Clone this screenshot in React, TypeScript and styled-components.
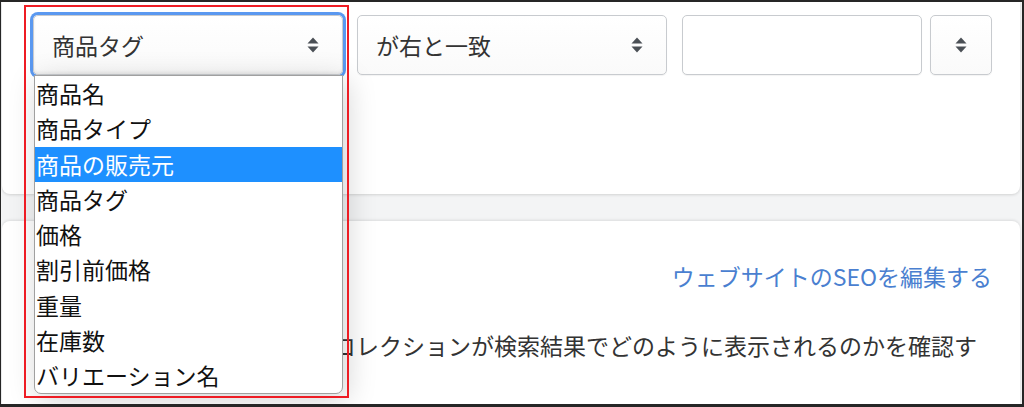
import styled, { createGlobalStyle } from 'styled-components';

const GlobalStyle = createGlobalStyle`
  body {
    margin: 0;
    font-family: "Noto Sans CJK JP", "Noto Sans", sans-serif;
  }
`;

const fieldOptions = [
  '商品名',
  '商品タイプ',
  '商品の販売元',
  '商品タグ',
  '価格',
  '割引前価格',
  '重量',
  '在庫数',
  'バリエーション名',
];

const SortArrows = () => (
  <svg width="12" height="18" viewBox="0 0 12 18" aria-hidden="true">
    <path d="M6 1.5 L11.5 7.5 H0.5 Z" fill="#4a4f55" />
    <path d="M6 16.5 L11.5 10.5 H0.5 Z" fill="#4a4f55" />
  </svg>
);

const App = () => {
  const selected = '商品の販売元';

  return (
    <>
      <GlobalStyle />
      <Frame>
        <TopCard>
          <FilterRow>
            <SelectBox $width={310} $focused>
              <SelectLabel>商品タグ</SelectLabel>
              <SortArrows />
              <OptionList>
                {fieldOptions.map((option) => (
                  <OptionItem key={option} $active={option === selected}>
                    {option}
                  </OptionItem>
                ))}
              </OptionList>
            </SelectBox>
            <SelectBox $width={310}>
              <SelectLabel>が右と一致</SelectLabel>
              <SortArrows />
            </SelectBox>
            <ValueInput type="text" />
            <SelectBox $width={62} $center>
              <SortArrows />
            </SelectBox>
          </FilterRow>
        </TopCard>
        <SeoCard>
          <SeoHeader>
            <SeoLink href="#">ウェブサイトのSEOを編集する</SeoLink>
          </SeoHeader>
          {/* the start of this line sits under the open list */}
          <SeoText>
            コレクションが検索結果でどのように表示されるのかを確認す
          </SeoText>
        </SeoCard>
        <Annotation />
      </Frame>
    </>
  );
};

const Frame = styled.div`
  position: relative;
  display: flex;
  flex-direction: column;
  row-gap: 27px;

  width: 1024px;
  height: 407px;
  box-sizing: border-box;
  overflow: hidden;

  border-style: solid;
  border-color: #262626;
  border-width: 2px 2px 3px 1px;
  background-color: #f3f4f5;
  color: #333333;
`;

const TopCard = styled.section`
  height: 192px;
  margin: 0 2px 0 1px;

  border-radius: 0 0 8px 8px;
  background-color: #ffffff;
  box-shadow: 0 1px 3px rgba(0, 0, 0, 0.14);
`;

const FilterRow = styled.div`
  display: flex;
  align-items: center;

  padding: 13px 0 0 31px;

  & > :nth-child(2) {
    margin-left: 14px;
  }
  & > :nth-child(3) {
    margin-left: 15px;
  }
  & > :nth-child(4) {
    margin-left: 8px;
  }
`;

const SelectBox = styled.div<{ $width: number; $focused?: boolean; $center?: boolean }>`
  position: relative;
  display: flex;
  align-items: center;
  justify-content: ${({ $center }) => ($center ? 'center' : 'space-between')};

  width: ${({ $width }) => $width}px;
  height: 60px;
  box-sizing: border-box;
  padding: ${({ $center }) => ($center ? '0' : '0 23px 0 18px')};

  border: 1px solid #c8cbcf;
  border-radius: 5px;
  background: linear-gradient(#ffffff, #fafafa);
  box-shadow: ${({ $focused }) =>
    $focused
      ? '0 0 0 3px #5a98f0, inset 0 -2px 3px rgba(0, 0, 0, 0.06)'
      : '0 1px 1px rgba(0, 0, 0, 0.05)'};
`;

const SelectLabel = styled.span`
  font-size: 23px;
  line-height: 1;
  color: #333333;
`;

const ValueInput = styled.input`
  width: 240px;
  height: 60px;
  box-sizing: border-box;

  border: 1px solid #c8cbcf;
  border-radius: 5px;
  background-color: #ffffff;
  box-shadow: 0 1px 1px rgba(0, 0, 0, 0.05);
  outline: none;
`;

const OptionList = styled.ul`
  position: absolute;
  top: calc(100% + 1px);
  left: 0;
  z-index: 10;

  width: 307px;
  margin: 0;
  padding: 0;
  list-style: none;

  border: 1px solid #a0a0a0;
  border-radius: 0 0 7px 7px;
  background-color: #ffffff;
  box-shadow: 4px 6px 30px rgba(0, 0, 0, 0.18);
`;

const OptionItem = styled.li<{ $active: boolean }>`
  height: 35.25px;
  padding-left: 1px;

  font-size: 23px;
  line-height: 35.25px;
  white-space: nowrap;
  color: ${({ $active }) => ($active ? '#ffffff' : '#111111')};
  background-color: ${({ $active }) => ($active ? '#1e90ff' : 'transparent')};
`;

const SeoCard = styled.section`
  flex: 1;
  margin: 0 2px 0 1px;
  padding: 38px 28px 0 30px;

  border-radius: 8px 8px 0 0;
  background-color: #ffffff;
  box-shadow: 0 -1px 3px rgba(0, 0, 0, 0.1);
`;

const SeoHeader = styled.div`
  display: flex;
  align-items: center;
  justify-content: flex-end;

  height: 34px;
`;

const SeoLink = styled.a`
  font-size: 23px;
  color: #4a7fd0;
  text-decoration: none;
`;

const SeoText = styled.p`
  margin: 35px 0 0 301px;

  font-size: 23px;
  line-height: 34px;
  white-space: nowrap;
  color: #333333;
`;

const Annotation = styled.div`
  position: absolute;
  top: 3px;
  left: 23px;
  z-index: 20;

  width: 325px;
  height: 393px;
  box-sizing: border-box;

  border: 2px solid #ee1c24;
  pointer-events: none;
`;

export default App;
